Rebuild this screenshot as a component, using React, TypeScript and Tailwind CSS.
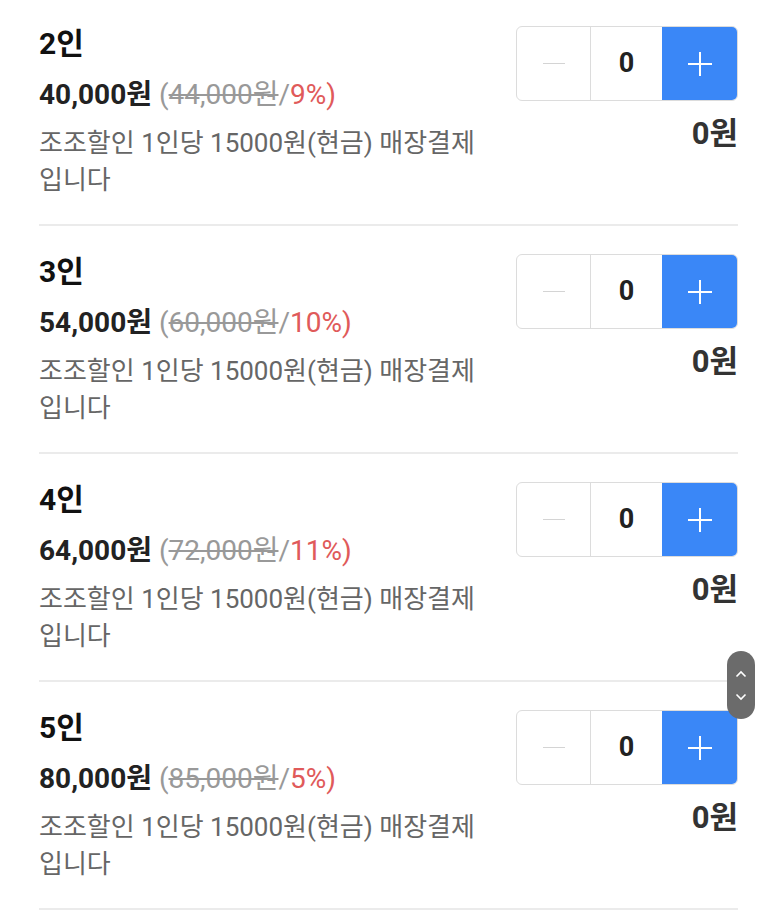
import React from "react";

const items = [
  { n: "2인", price: "40,000원", orig: "44,000원", pct: "9%" },
  { n: "3인", price: "54,000원", orig: "60,000원", pct: "10%" },
  { n: "4인", price: "64,000원", orig: "72,000원", pct: "11%" },
  { n: "5인", price: "80,000원", orig: "85,000원", pct: "5%" },
];

function Row({ n, price, orig, pct }: { n: string; price: string; orig: string; pct: string }) {
  return (
    <div className="flex justify-between border-b-2 border-[#ebebeb] pt-[28px] pb-[25px]">
      <div className="w-[450px]">
        <div className="text-[30px] font-bold leading-[36px] text-[#111]">{n}</div>
        <div className="mt-[15px] text-[28px] leading-[36px]">
          <span className="font-bold text-[#222]">{price}</span>{" "}
          <span className="text-[#999]">(</span>
          <span className="text-[#999] line-through">{orig}</span>
          <span className="text-[#999]">/</span>
          <span className="text-[#e05a5a]">{pct})</span>
        </div>
        <div className="mt-[12px] break-keep text-[26px] leading-[37px] text-[#666]">
          조조할인 1인당 15000원(현금) 매장결제 입니다
        </div>
      </div>
      <div className="flex flex-col items-end">
        <div className="flex h-[75px] w-[222px] overflow-hidden rounded-[6px] border border-[#dcdcdc]">
          <div className="flex w-[74px] items-center justify-center border-r border-[#dcdcdc]">
            <div className="h-[1.5px] w-[22px] bg-[#d4d4d4]" />
          </div>
          <div className="flex flex-1 items-center justify-center text-[27px] font-bold text-[#222]">0</div>
          <div className="flex w-[75px] items-center justify-center bg-[#3a87f7]">
            <svg width="26" height="26" viewBox="0 0 26 26">
              <path d="M13 1v24M1 13h24" stroke="#fff" strokeWidth="2" />
            </svg>
          </div>
        </div>
        <div className="mt-[15px] text-[31px] font-bold leading-[36px] text-[#333]">0원</div>
      </div>
    </div>
  );
}

export default function App() {
  return (
    <div
      className="relative h-[911px] w-[773px] overflow-hidden bg-white"
      style={{ fontFamily: 'Roboto, "Noto Sans CJK KR", sans-serif' }}
    >
      <div className="-mt-[2px] pl-[39px] pr-[35px]">
        {items.map((it) => (
          <Row key={it.n} {...it} />
        ))}
      </div>
      <div className="absolute left-[727px] top-[651px] flex h-[68px] w-[28px] flex-col items-center justify-center gap-[15px] rounded-full bg-[#6b6b6b]">
        <svg width="12" height="8" viewBox="0 0 12 8">
          <path d="M1.5 6.5L6 2l4.5 4.5" stroke="#fff" strokeWidth="1.6" fill="none" />
        </svg>
        <svg width="12" height="8" viewBox="0 0 12 8">
          <path d="M1.5 1.5L6 6l4.5-4.5" stroke="#fff" strokeWidth="1.6" fill="none" />
        </svg>
      </div>
    </div>
  );
}
